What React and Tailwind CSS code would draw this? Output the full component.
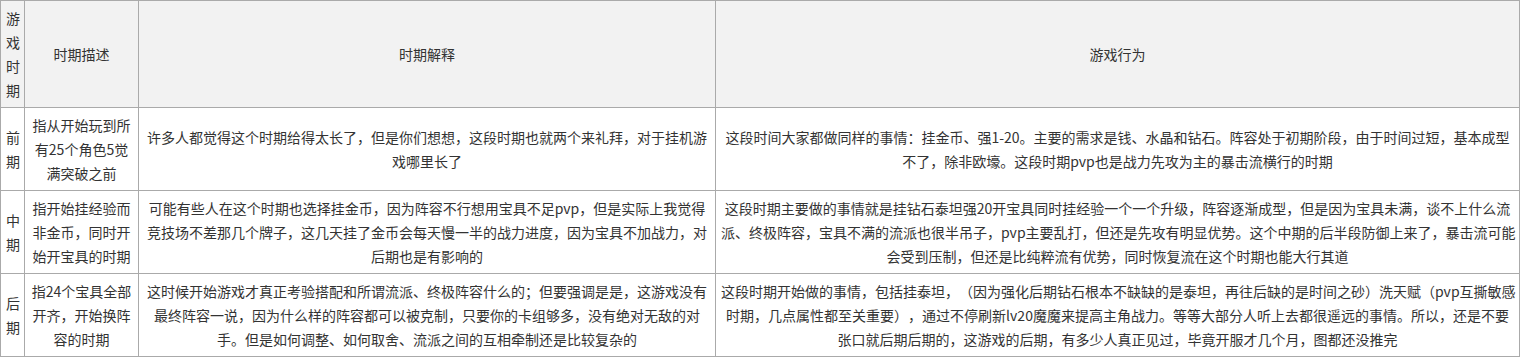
import React from 'react';

const rows = [
  {
    period: '前期',
    desc: ['指从开始玩到所', '有25个角色5觉', '满突破之前'],
    explain: ['许多人都觉得这个时期给得太长了，但是你们想想，这段时期也就两个来礼拜，对于挂机游', '戏哪里长了'],
    action: [
      '这段时间大家都做同样的事情：挂金币、强1-20。主要的需求是钱、水晶和钻石。阵容处于初期阶段，由于时间过短，基本成型',
      '不了，除非欧壕。这段时期pvp也是战力先攻为主的暴击流横行的时期',
    ],
  },
  {
    period: '中期',
    desc: ['指开始挂经验而', '非金币，同时开', '始开宝具的时期'],
    explain: [
      '可能有些人在这个时期也选择挂金币，因为阵容不行想用宝具不足pvp，但是实际上我觉得',
      '竞技场不差那几个牌子，这几天挂了金币会每天慢一半的战力进度，因为宝具不加战力，对',
      '后期也是有影响的',
    ],
    action: [
      '这段时期主要做的事情就是挂钻石泰坦强20开宝具同时挂经验一个一个升级，阵容逐渐成型，但是因为宝具未满，谈不上什么流',
      '派、终极阵容，宝具不满的流派也很半吊子，pvp主要乱打，但还是先攻有明显优势。这个中期的后半段防御上来了，暴击流可能',
      '会受到压制，但还是比纯粹流有优势，同时恢复流在这个时期也能大行其道',
    ],
  },
  {
    period: '后期',
    desc: ['指24个宝具全部', '开齐，开始换阵', '容的时期'],
    explain: [
      '这时候开始游戏才真正考验搭配和所谓流派、终极阵容什么的；但要强调是是，这游戏没有',
      '最终阵容一说，因为什么样的阵容都可以被克制，只要你的卡组够多，没有绝对无敌的对',
      '手。但是如何调整、如何取舍、流派之间的互相牵制还是比较复杂的',
    ],
    action: [
      '这段时期开始做的事情，包括挂泰坦，（因为强化后期钻石根本不缺缺的是泰坦，再往后缺的是时间之砂）洗天赋（pvp互撕敏感',
      '时期，几点属性都至关重要），通过不停刷新lv20魔魔来提高主角战力。等等大部分人听上去都很遥远的事情。所以，还是不要',
      '张口就后期后期的，这游戏的后期，有多少人真正见过，毕竟开服才几个月，图都还没推完',
    ],
  },
];

const cell = 'border border-[#aaaaaa] px-[5px] py-[5px] text-center align-middle font-normal';

function Lines({ lines }) {
  return lines.map((l, i) => (
    <React.Fragment key={i}>
      {i > 0 && <br />}
      {l}
    </React.Fragment>
  ));
}

export default function App() {
  return (
    <div className="bg-white w-[1522px] h-[358px] overflow-hidden">
      <table className="table-fixed border-collapse w-[1520px] text-[14px] leading-[24px] text-[#333333] font-['Noto_Sans_CJK_SC','Noto_Sans',sans-serif] [text-spacing-trim:space-all]">
        <thead>
          <tr className="bg-[#f2f2f2]">
            <th className={`${cell} w-[24px] px-[4px] break-all`}>游戏时期</th>
            <th className={`${cell} w-[114px]`}>时期描述</th>
            <th className={`${cell} w-[577px]`}>时期解释</th>
            <th className={cell}>游戏行为</th>
          </tr>
        </thead>
        <tbody>
          {rows.map((r) => (
            <tr key={r.period}>
              <td className={`${cell} px-[4px] break-all`}>{r.period}</td>
              <td className={`${cell} whitespace-nowrap`}>
                <Lines lines={r.desc} />
              </td>
              <td className={`${cell} whitespace-nowrap`}>
                <Lines lines={r.explain} />
              </td>
              <td className={`${cell} whitespace-nowrap`}>
                <Lines lines={r.action} />
              </td>
            </tr>
          ))}
        </tbody>
      </table>
    </div>
  );
}
